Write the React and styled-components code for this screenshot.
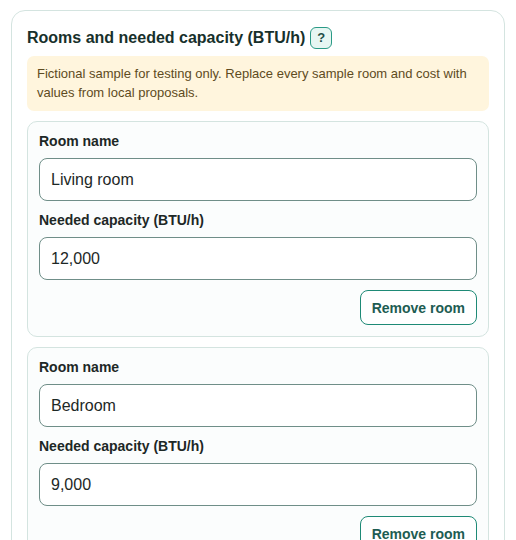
import styled, { createGlobalStyle } from "styled-components";

const GlobalStyle = createGlobalStyle`
  body {
    margin: 0;
    background: #ffffff;
    font-family: "Liberation Sans", Arial, sans-serif;
  }
`;

const Page = styled.div`
  padding: 10px 11px;
`;

const Panel = styled.section`
  border: 1px solid #d4e4e0;
  border-radius: 14px;
  padding: 16px 15px 16px 15px;
  background: #ffffff;
`;

const HeadingRow = styled.div`
  display: flex;
  align-items: center;
  gap: 5px;
  margin-bottom: 7px;
`;

const Heading = styled.h2`
  margin: 0;
  font-size: 16px;
  font-weight: 700;
  color: #17302b;
`;

const HelpBadge = styled.button`
  width: 22px;
  height: 22px;
  padding: 0;
  border: 1px solid #2a9a86;
  border-radius: 6px;
  background: #e6f6f2;
  color: #1d4f47;
  font-family: inherit;
  font-size: 13px;
  font-weight: 700;
  line-height: 20px;
  text-align: center;
`;

const Note = styled.div`
  background: #fff5dd;
  border-radius: 7px;
  padding: 8px 10px 9px;
  font-size: 13px;
  line-height: 19px;
  color: #5e4b22;
  margin-bottom: 10px;
`;

const RoomList = styled.div`
  display: flex;
  flex-direction: column;
  gap: 10px;
`;

const RoomCard = styled.div`
  border: 1px solid #d4e4e0;
  border-radius: 10px;
  background: #fbfdfd;
  padding: 11px 11px 11px;
  display: flex;
  flex-direction: column;
`;

const Label = styled.label`
  display: block;
  font-size: 14px;
  font-weight: 700;
  line-height: 17px;
  color: #1d2826;
  margin-top: ${(p) => (p.$first ? "0" : "11px")};
  margin-bottom: 8px;
`;

const Input = styled.input`
  box-sizing: border-box;
  width: 100%;
  height: 43px;
  padding: 0 11px;
  border: 1px solid #6f8e88;
  border-radius: 8px;
  background: #ffffff;
  font-family: inherit;
  font-size: 16px;
  color: #1d2826;
`;

const Actions = styled.div`
  display: flex;
  justify-content: flex-end;
  margin-top: 10px;
`;

const RemoveButton = styled.button`
  height: 35px;
  padding: 0 11px;
  border: 1px solid #1e8a76;
  border-radius: 8px;
  background: #ffffff;
  color: #1d5c52;
  font-family: inherit;
  font-size: 14px;
  font-weight: 700;
`;

const rooms = [
  { name: "Living room", capacity: "12,000" },
  { name: "Bedroom", capacity: "9,000" },
];

const App = () => {
  return (
    <Page>
      <GlobalStyle />
      <Panel>
        <HeadingRow>
          <Heading>Rooms and needed capacity (BTU/h)</Heading>
          <HelpBadge>?</HelpBadge>
        </HeadingRow>
        <Note>
          Fictional sample for testing only. Replace every sample room and cost
          with values from local proposals.
        </Note>
        <RoomList>
          {rooms.map((room) => (
            <RoomCard key={room.name}>
              <Label $first>Room name</Label>
              <Input defaultValue={room.name} />
              <Label>Needed capacity (BTU/h)</Label>
              <Input defaultValue={room.capacity} />
              <Actions>
                <RemoveButton>Remove room</RemoveButton>
              </Actions>
            </RoomCard>
          ))}
        </RoomList>
      </Panel>
    </Page>
  );
};

export default App;
